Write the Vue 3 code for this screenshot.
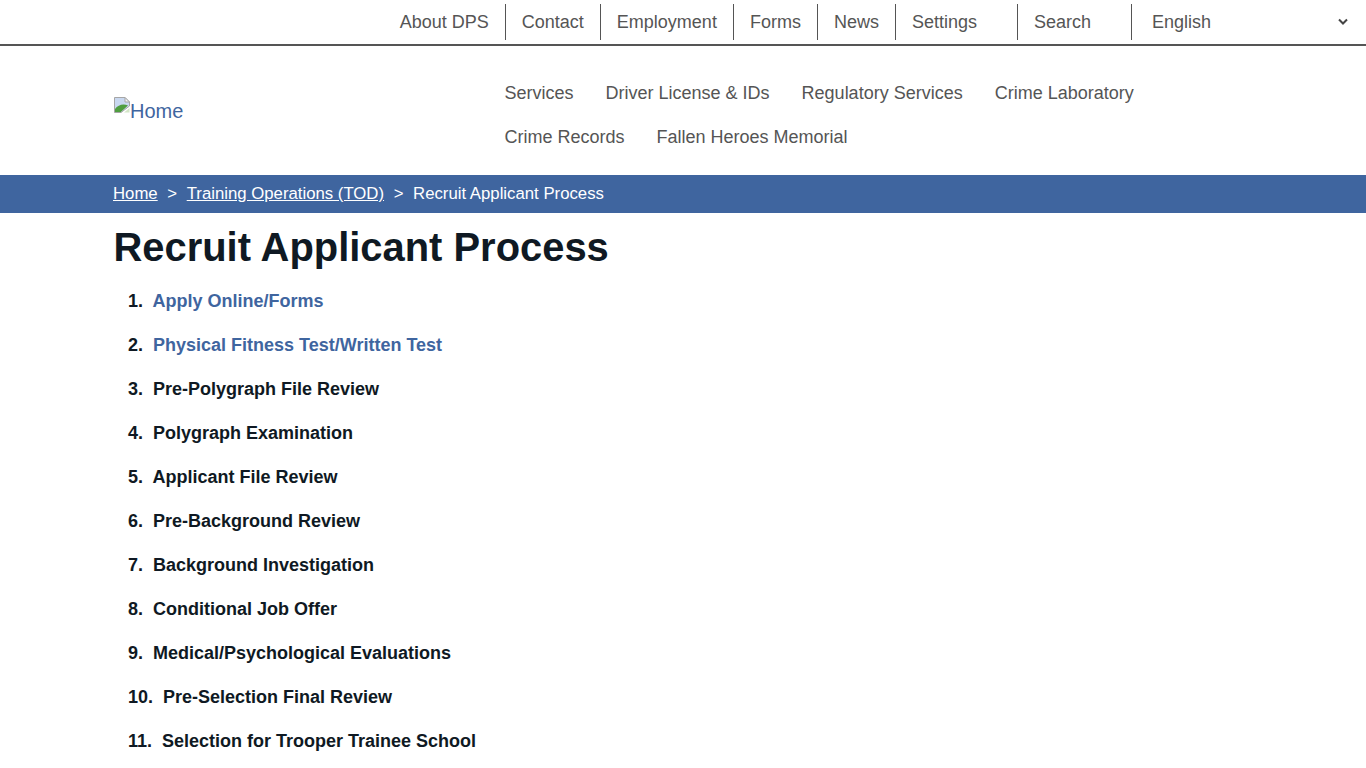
<script setup>
const top = [
  { label: 'About DPS', extra: 0 },
  { label: 'Contact', extra: 0 },
  { label: 'Employment', extra: 0 },
  { label: 'Forms', extra: 0 },
  { label: 'News', extra: 0 },
  { label: 'Settings', extra: 24 },
  { label: 'Search', extra: 24 }
]
const nav = [
  ['Services', 'Driver License & IDs', 'Regulatory Services', 'Crime Laboratory'],
  ['Crime Records', 'Fallen Heroes Memorial']
]
const steps = [
  { n: '1.', t: 'Apply Online/Forms', link: true, tight: true },
  { n: '2.', t: 'Physical Fitness Test/Written Test', link: true },
  { n: '3.', t: 'Pre-Polygraph File Review' },
  { n: '4.', t: 'Polygraph Examination' },
  { n: '5.', t: 'Applicant File Review', tight: true },
  { n: '6.', t: 'Pre-Background Review' },
  { n: '7.', t: 'Background Investigation' },
  { n: '8.', t: 'Conditional Job Offer' },
  { n: '9.', t: 'Medical/Psychological Evaluations' },
  { n: '10.', t: 'Pre-Selection Final Review' },
  { n: '11.', t: 'Selection for Trooper Trainee School' }
]
</script>

<template>
  <div class="page">
    <div class="topbar">
      <a
        v-for="item in top"
        :key="item.label"
        class="top-item"
        :style="{ paddingRight: 16 + item.extra + 'px' }"
      >{{ item.label }}</a>
      <div class="lang">
        <span>English</span>
        <svg width="10" height="8" viewBox="0 0 10 8" class="chev">
          <path d="M1 1.5 L5 5.5 L9 1.5" fill="none" stroke="#444" stroke-width="2" />
        </svg>
      </div>
    </div>

    <header class="masthead">
      <a class="logo">
        <svg class="broken" width="16" height="16" viewBox="0 0 16 16">
          <path d="M0.5 0.5 H11 L15.5 5 V9 L7 15.5 H0.5 Z" fill="#c9d8f0" stroke="#a6a6a6" />
          <path d="M11 0.5 V5 H15.5 Z" fill="#f2f2f2" stroke="#a6a6a6" />
          <path d="M1 15 V12 C4 8 9 6.5 14 8.5 L6.8 15 Z" fill="#4f9e3f" />
          <path d="M15.5 11 L10 15.5 H15.5 Z" fill="#d4e5c8" />
        </svg><span class="logo-text">Home</span>
      </a>
      <nav class="mainnav">
        <div v-for="(row, i) in nav" :key="i" class="nav-row">
          <a v-for="l in row" :key="l">{{ l }}</a>
        </div>
      </nav>
    </header>

    <div class="crumbs">
      <a>Home</a>
      <span class="sep">&gt;</span>
      <a>Training Operations (TOD)</a>
      <span class="sep">&gt;</span>
      <span>Recruit Applicant Process</span>
    </div>

    <main class="content">
      <h1>Recruit Applicant Process</h1>
      <ol class="steps">
        <li v-for="s in steps" :key="s.n">
          <span>{{ s.n }}</span><span class="gap" :class="{ tight: s.tight }"></span><a v-if="s.link" class="link">{{ s.t }}</a><span v-else>{{ s.t }}</span>
        </li>
      </ol>
    </main>
  </div>
</template>

<style scoped>
.page {
  height: 768px;
  overflow: hidden;
  background: #fff;
  font-family: "Liberation Sans", Arial, sans-serif;
  font-size: 18px;
  color: #0f1923;
}
.topbar {
  height: 44px;
  box-sizing: content-box;
  border-bottom: 2px solid #555;
  display: flex;
  align-items: center;
  justify-content: flex-end;
}
.top-item {
  height: 36px;
  line-height: 36px;
  padding-left: 16px;
  border-right: 1px solid #555;
  color: #555;
}
.lang {
  width: 234px;
  box-sizing: border-box;
  padding-left: 20px;
  padding-right: 18px;
  display: flex;
  align-items: center;
  justify-content: space-between;
  color: #555;
}
.masthead {
  height: 129px;
  display: flex;
  padding-left: 114px;
}
.logo {
  width: 390.5px;
  flex: none;
  padding-top: 51px;
  height: 26px;
  color: #3f659f;
  font-size: 20px;
  display: flex;
  align-items: flex-start;
}
.logo-text {
  line-height: 28px;
}
.broken {
  flex: none;
}
.mainnav {
  padding-top: 25px;
}
.nav-row {
  display: flex;
  gap: 32px;
  height: 44px;
  line-height: 44px;
  color: #555;
}
.crumbs {
  height: 38px;
  line-height: 38px;
  background: #3f659f;
  color: #fff;
  font-size: 16.75px;
  padding-left: 113px;
  display: flex;
}
.crumbs a {
  text-decoration: underline;
}
.sep {
  width: 29px;
  text-align: center;
}
.content {
  padding-left: 113.5px;
}
h1 {
  margin: 0;
  font-size: 39.92px;
  font-weight: 700;
  line-height: 68px;
  color: #0f1923;
}
.steps {
  list-style: none;
  margin: 0;
  padding: 0 0 0 14.5px;
  font-weight: 700;
}
.steps li {
  height: 44px;
  line-height: 40px;
}
.gap {
  display: inline-block;
  width: 10px;
}
.gap.tight {
  width: 9.5px;
}
.link {
  color: #3f659f;
}
</style>
